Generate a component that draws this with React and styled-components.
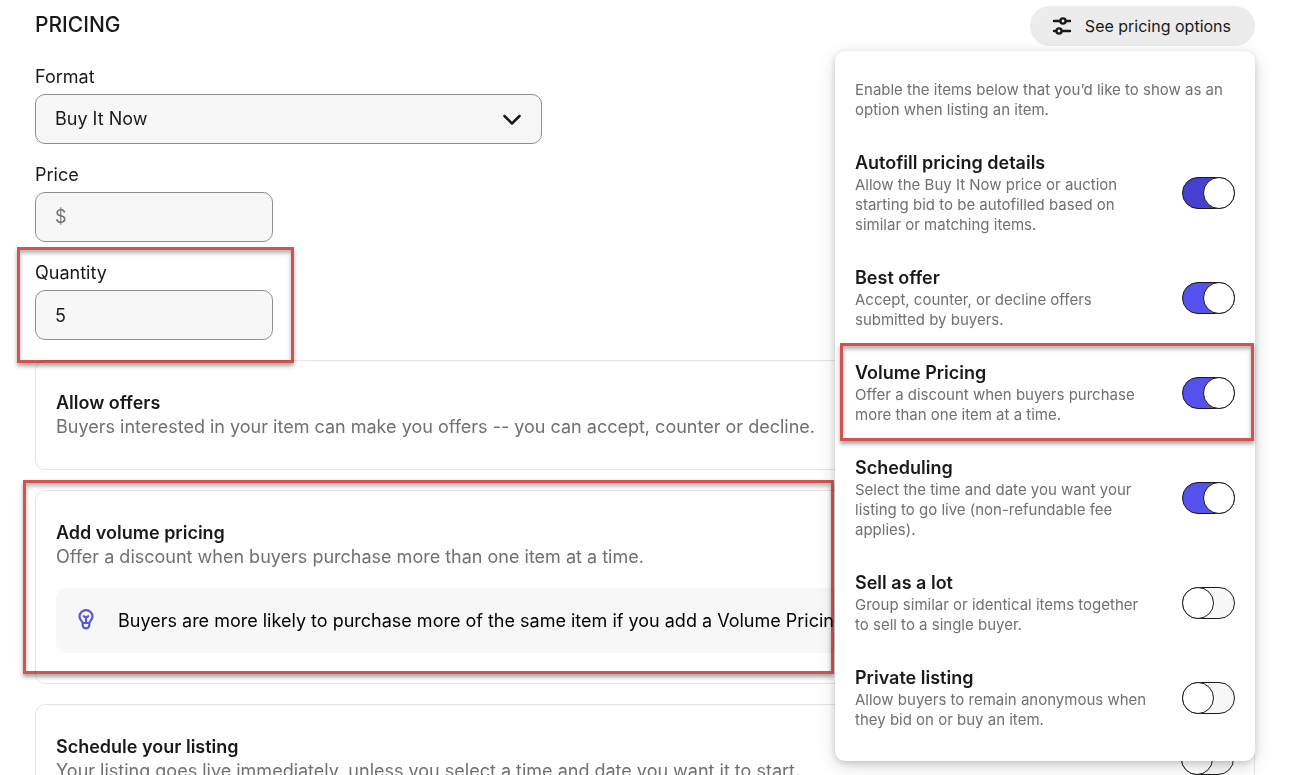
import styled, { createGlobalStyle } from "styled-components"
import { useState } from "react"

const GlobalStyle = createGlobalStyle`
    *, *::before {
        box-sizing: border-box;
    }
    body {
        margin: 0;
        background: #fff;
        color: #191919;
        font-family: Inter, "Liberation Sans", sans-serif;
        font-size: 18px;
        line-height: 24px;
    }
    button, input, select {
        font: inherit;
        color: inherit;
    }
`
const Page = styled.main`
    height: 100vh;
    overflow: hidden;
    padding: 6px 35px 0;
`
const Header = styled.header`
    display: flex;
    justify-content: space-between;
    align-items: flex-start;
    margin-bottom: 19px;
`
const Title = styled.h1`
    margin: 7px 0 0;
    font-size: 21px;
    font-weight: 500;
    line-height: 24px;
`
const Menu = styled.div`
    position: relative;
    z-index: 2;
`
const MenuButton = styled.button`
    display: flex;
    align-items: center;
    gap: 13px;
    height: 40px;
    padding: 0 24px 0 22px;
    border: 0;
    border-radius: 20px;
    background: #ececec;
    font-size: 16px;
`
const Panel = styled.section`
    position: absolute;
    top: 45px;
    right: 0;
    width: 420px;
    padding: 29px 20px 31px;
    display: flex;
    flex-direction: column;
    gap: 30px;
    border-radius: 10px;
    background: #fff;
    box-shadow: 0 2px 7px rgba(0, 0, 0, 0.15), 0 5px 17px rgba(0, 0, 0, 0.15);
`
const Intro = styled.p`
    margin: 0;
    font-size: 15px;
    line-height: 20px;
    color: #707070;
`
const Option = styled.div`
    position: relative;
    display: flex;
    justify-content: space-between;
    align-items: center;
    gap: 28px;
`
const OptionText = styled.div`
    flex: 1;
`
const OptionName = styled.label`
    display: block;
    font-weight: 600;
    line-height: 25px;
`
const Switch = styled.input`
    appearance: none;
    flex: none;
    width: 53px;
    height: 32px;
    margin: 0;
    border: 1px solid #191919;
    border-radius: 16px;
    background: #f7f7f7;

    &::before {
        content: "";
        display: block;
        width: 32px;
        height: 32px;
        margin: -1px;
        border: 1px solid #191919;
        border-radius: 50%;
        background: #fff;
    }
    &:checked {
        background: ${(props) => (props.$active ? "#4740cf" : "#5551ed")};
    }
    &:checked::before {
        margin-left: 20px;
    }
`
const Fields = styled.div`
    display: flex;
    flex-direction: column;
    align-items: flex-start;
    gap: 19px;
    margin-bottom: 20px;
`
const Field = styled.div`
    position: relative;
    width: ${(props) => (props.$wide ? "507px" : "238px")};
    max-width: 100%;
`
const Label = styled.label`
    display: block;
    margin-bottom: 5px;
`
const Control = styled.div`
    display: flex;
    align-items: center;
    height: 50px;
    border: 1px solid #8f8f8f;
    border-radius: 10px;
    background: #f7f7f7;
`
const Select = styled.select`
    appearance: none;
    flex: 1;
    height: 100%;
    padding: 0 19px;
    border: 0;
    background: transparent;
`
const Chevron = styled.svg`
    flex: none;
    margin-right: 19px;
    pointer-events: none;
`
const Currency = styled.span`
    padding-left: 19px;
    color: #707070;
`
const Input = styled.input`
    flex: 1;
    min-width: 0;
    height: 100%;
    padding: 0 19px;
    border: 0;
    background: transparent;
`
const Cards = styled.div`
    display: flex;
    flex-direction: column;
    gap: 20px;
`
const Card = styled.section`
    position: relative;
    display: flex;
    justify-content: space-between;
    align-items: center;
    padding: 30px 20px;
    border: 1px solid #e5e5e5;
    border-radius: 10px;
`
const CardBody = styled.div`
    flex: 1;
`
const CardTitle = styled.h2`
    margin: 0;
    font-size: 18px;
    font-weight: 600;
    line-height: 24px;
`
const CardText = styled.p`
    margin: 0;
    color: #707070;
`
const Notice = styled.div`
    display: flex;
    align-items: center;
    gap: 24px;
    height: 65px;
    margin-top: 19px;
    padding: 0 22px;
    border-radius: 10px;
    background: #f7f7f7;
    color: #000;
`
const Highlight = styled.div`
    position: absolute;
    z-index: 1;
    border: 3px solid #d35252;
    box-shadow: 0 3px 4px rgba(0, 0, 0, 0.35), inset 0 3px 4px rgba(0, 0, 0, 0.3);
    mix-blend-mode: multiply;
    pointer-events: none;
`
const FieldHighlight = styled(Highlight)`
    inset: -14px -21px -23px -18px;
`
const CardHighlight = styled(Highlight)`
    inset: -11px 420px 9px -13px;
`
const OptionHighlight = styled(Highlight)`
    inset: -17px -19px -16px -15px;
`

const options = [
    { id: "autofill", name: "Autofill pricing details", text: "Allow the Buy It Now price or auction starting bid to be autofilled based on similar or matching items.", on: true, active: true },
    { id: "offer", name: "Best offer", text: "Accept, counter, or decline offers submitted by buyers.", on: true },
    { id: "volume", name: "Volume Pricing", text: "Offer a discount when buyers purchase more than one item at a time.", on: true, marked: true },
    { id: "schedule", name: "Scheduling", text: "Select the time and date you want your listing to go live (non-refundable fee applies).", on: true },
    { id: "lot", name: "Sell as a lot", text: "Group similar or identical items together to sell to a single buyer.", on: false },
    { id: "private", name: "Private listing", text: "Allow buyers to remain anonymous when they bid on or buy an item.", on: false },
]

const SlidersIcon = () => (
    <svg width="20" height="18" viewBox="0 0 20 18" fill="none" stroke="#191919" strokeWidth="2.4" strokeLinecap="round" aria-hidden="true">
        <path d="M2 4h6M14 4h4M2 14h2M10 14h8" />
        <circle cx="11" cy="4" r="2.6" />
        <circle cx="7" cy="14" r="2.6" />
    </svg>
)

const BulbIcon = () => (
    <svg width="16" height="24" viewBox="0 0 16 24" fill="none" stroke="#5c55d6" strokeWidth="2.2" strokeLinecap="round" strokeLinejoin="round" aria-hidden="true">
        <path d="M4.700 14C4.300 11.900 1.500 11 1.500 7.400a6.500 6.300 0 0 1 13 0c0 3.600-2.800 4.500-3.200 6.600M4.700 14h6.600v2.200a3.300 3.200 0 0 1-6.600 0z" />
        <path d="M5.800 7.200L8 8.600l2.200-1.400M8 8.600V13" />
    </svg>
)

const App = () => {
    const [enabled, setEnabled] = useState(
        Object.fromEntries(options.map((item) => [item.id, item.on]))
    )
    const [price, setPrice] = useState("")
    const [quantity, setQuantity] = useState("5")
    const [scheduled, setScheduled] = useState(false)

    const toggle = (e) => {
        setEnabled({
            ...enabled,
            [e.target.name]: e.target.checked,
        })
    }

    return (
        <Page>
            <GlobalStyle />
            <Header>
                <Title>PRICING</Title>
                <Menu>
                    <MenuButton type="button" aria-expanded="true">
                        <SlidersIcon />
                        See pricing options
                    </MenuButton>
                    <Panel>
                        <Intro>Enable the items below that you’d like to show as an option when listing an item.</Intro>
                        {options.map((item) => (
                            <Option key={item.id}>
                                <OptionText>
                                    <OptionName htmlFor={item.id}>{item.name}</OptionName>
                                    <Intro>{item.text}</Intro>
                                </OptionText>
                                <Switch
                                    type="checkbox"
                                    role="switch"
                                    id={item.id}
                                    name={item.id}
                                    checked={enabled[item.id]}
                                    onChange={toggle}
                                    $active={item.active}
                                />
                                {item.marked && <OptionHighlight />}
                            </Option>
                        ))}
                    </Panel>
                </Menu>
            </Header>
            <Fields>
                <Field $wide>
                    <Label htmlFor="format">Format</Label>
                    <Control>
                        <Select id="format">
                            <option>Buy It Now</option>
                            <option>Auction</option>
                        </Select>
                        <Chevron width="20" height="12" viewBox="0 0 20 12" fill="none" stroke="#191919" strokeWidth="2.5" strokeLinecap="round" strokeLinejoin="round" aria-hidden="true">
                            <path d="M2.500 3l7.500 7.500L17.500 3" />
                        </Chevron>
                    </Control>
                </Field>
                <Field>
                    <Label htmlFor="price">Price</Label>
                    <Control>
                        <Currency>$</Currency>
                        <Input id="price" value={price} onChange={(e) => setPrice(e.target.value)} />
                    </Control>
                </Field>
                <Field>
                    <Label htmlFor="quantity">Quantity</Label>
                    <Control>
                        <Input id="quantity" value={quantity} onChange={(e) => setQuantity(e.target.value)} />
                    </Control>
                    <FieldHighlight />
                </Field>
            </Fields>
            <Cards>
                <Card>
                    <CardBody>
                        <CardTitle>Allow offers</CardTitle>
                        <CardText>Buyers interested in your item can make you offers -- you can accept, counter or decline.</CardText>
                    </CardBody>
                </Card>
                <Card>
                    <CardBody>
                        <CardTitle>Add volume pricing</CardTitle>
                        <CardText>Offer a discount when buyers purchase more than one item at a time.</CardText>
                        <Notice>
                            <BulbIcon />
                            Buyers are more likely to purchase more of the same item if you add a Volume Pricing
                        </Notice>
                    </CardBody>
                    <CardHighlight />
                </Card>
                <Card>
                    <CardBody>
                        <CardTitle>Schedule your listing</CardTitle>
                        <CardText>Your listing goes live immediately, unless you select a time and date you want it to start.</CardText>
                    </CardBody>
                    <Switch
                        type="checkbox"
                        role="switch"
                        aria-label="Schedule your listing"
                        checked={scheduled}
                        onChange={(e) => setScheduled(e.target.checked)}
                    />
                </Card>
            </Cards>
        </Page>
    )
}

export default App
